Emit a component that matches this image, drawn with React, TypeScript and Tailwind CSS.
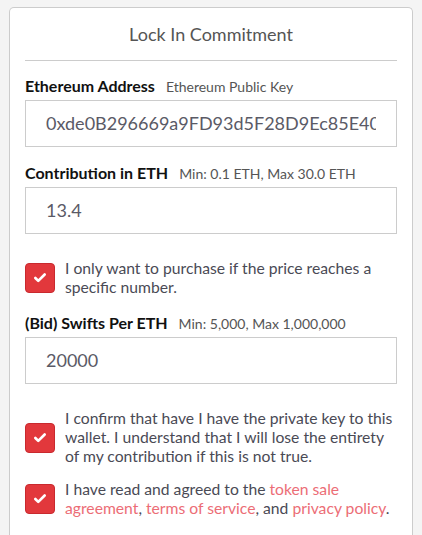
import { Check } from 'lucide-react';

function Field({ label, hint, value }: { label: string; hint: string; value: string }) {
  return (
    <div>
      <div className="flex h-[20px] items-baseline gap-[11px] leading-[20px]">
        <span className="text-[16px] font-bold text-[#111]">{label}</span>
        <span className="text-[14px] text-[#555]">{hint}</span>
      </div>
      <div className="mt-[4px] h-[47px] border border-[#ccc] bg-white px-[20px] text-[18px] leading-[45px] text-[#5a5a66]">
        <div className="overflow-hidden whitespace-nowrap">{value}</div>
      </div>
    </div>
  );
}

function Box() {
  return (
    <span className="flex h-[30px] w-[30px] shrink-0 items-center justify-center rounded-[4px] border border-[#c9292e] bg-[#e2383c]">
      <Check size={14} strokeWidth={4.5} color="#fff" />
    </span>
  );
}

function CheckRow({ children }: { children: React.ReactNode }) {
  return (
    <div className="flex items-center gap-[10px]">
      <Box />
      <p className="text-[15.7px] leading-[19px] text-[#4a4a55]">{children}</p>
    </div>
  );
}

export default function App() {
  return (
    <div className="min-h-[535px] bg-[#f4f4f4] px-[9px] pt-[7px] font-['Lato',sans-serif]">
      <div className="h-[540px] rounded-t-[5px] border border-b-0 border-[#ccc] bg-white px-[15px]">
        <h1 className="pt-[15px] pb-[15px] text-center text-[18px] leading-[22px] text-[#555]">
          Lock In Commitment
        </h1>
        <div className="border-t border-[#ccc]" />
        <div className="mt-[15px] flex flex-col gap-[16px]">
          <Field label="Ethereum Address" hint="Ethereum Public Key" value="0xde0B296669a9FD93d5F28D9Ec85E40f4cb697BAe" />
          <Field label="Contribution in ETH" hint="Min: 0.1 ETH, Max 30.0 ETH" value="13.4" />
        </div>
        <div className="mt-[25px]">
          <CheckRow>I only want to purchase if the price reaches a specific number.</CheckRow>
        </div>
        <div className="mt-[16px]">
          <Field label="(Bid) Swifts Per ETH" hint="Min: 5,000, Max 1,000,000" value="20000" />
        </div>
        <div className="mt-[25px] flex flex-col gap-[14px]">
          <CheckRow>
            I confirm that have I have the private key to this wallet. I understand that I will lose the entirety of my contribution if this is not true.
          </CheckRow>
          <CheckRow>
            I have read and agreed to the <a className="text-[#ec6d76]">token sale agreement</a>,{' '}
            <a className="text-[#ec6d76]">terms of service</a>, and <a className="text-[#ec6d76]">privacy policy</a>.
          </CheckRow>
        </div>
      </div>
    </div>
  );
}
